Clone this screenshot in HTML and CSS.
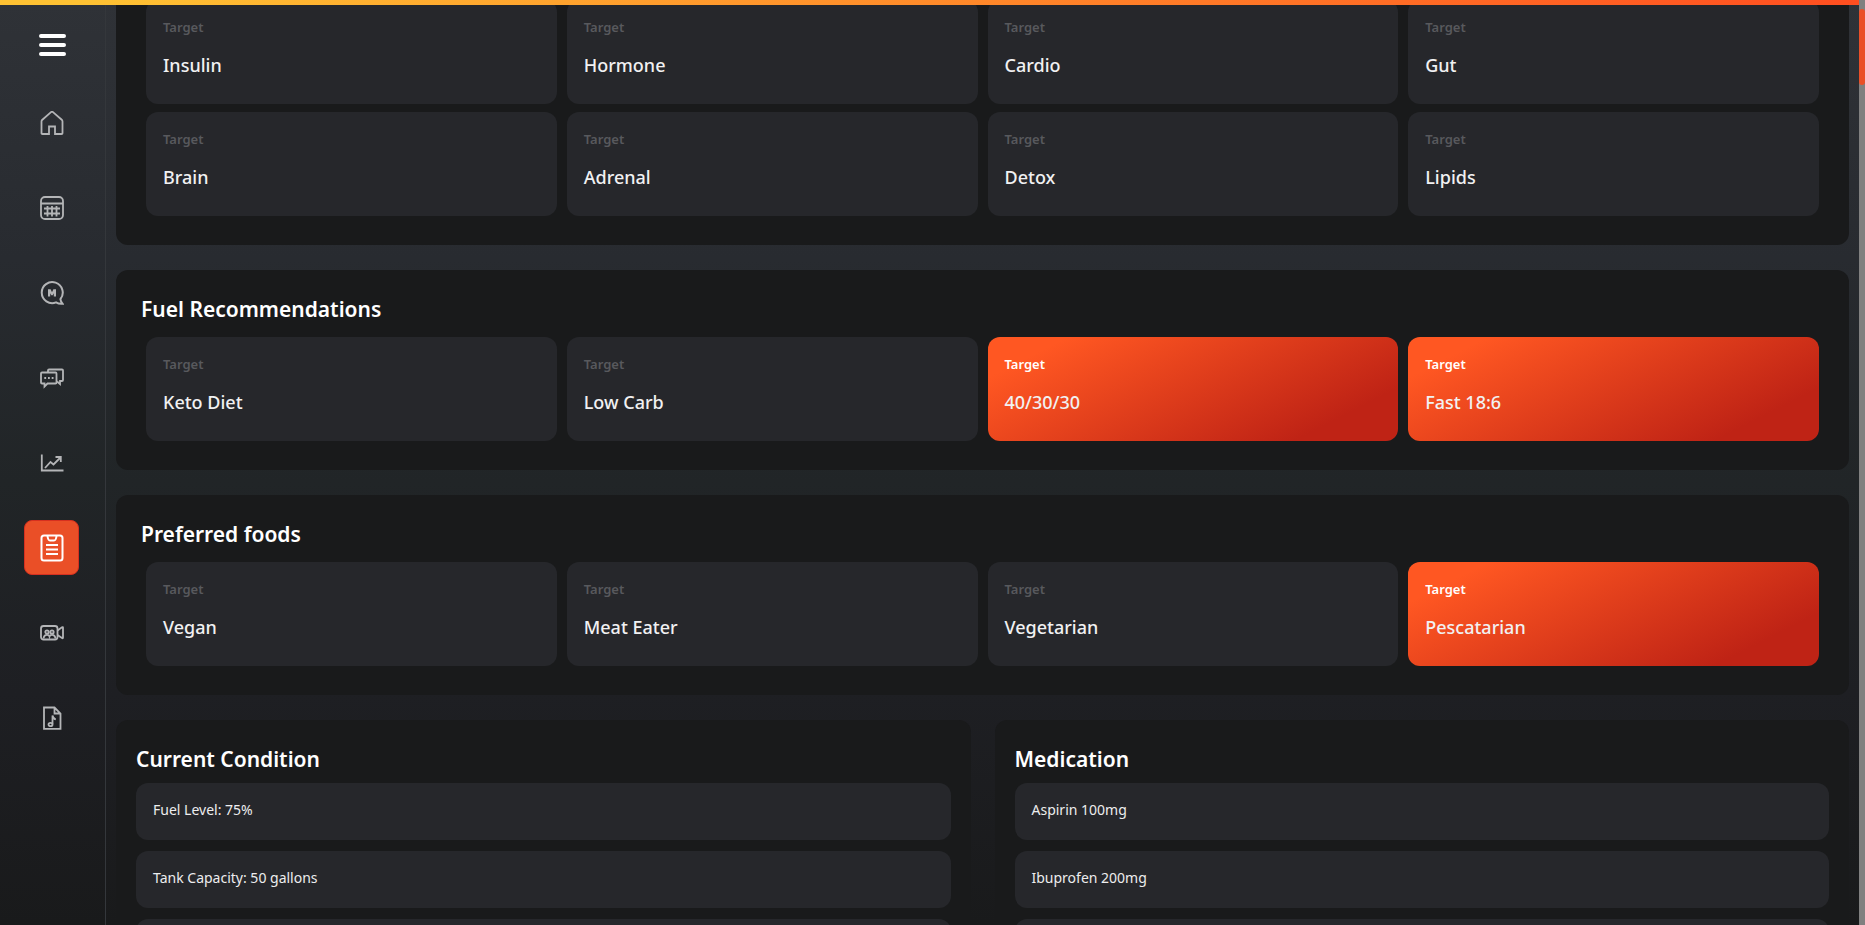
FILE: index.html
```html
<!DOCTYPE html>
<html lang="en">
<head>
<meta charset="utf-8">
<meta name="viewport" content="width=device-width, initial-scale=1">
<title>Health Report</title>
<link rel="stylesheet" href="styles.css">
</head>
<body>
<div class="progress-bar"></div>
<div class="app">
  <nav class="sidebar" aria-label="Main">
    <button class="menu-button" type="button" aria-label="Menu">
      <svg width="28" height="24" viewBox="0 0 28 24" fill="none" stroke="#fff" stroke-width="4" stroke-linecap="round"><path d="M3 3h23M3 12h23M3 21h23"/></svg>
    </button>
    <a class="nav-link" href="#home" aria-label="Home">
      <svg class="icon" viewBox="0 0 24 24"><path d="M1.5 22.2V10.4Q1.5 9.6 2.1 9L11 1.1Q12 .4 13 1.100L22 9Q22.500 9.600 22.500 10.400V22.200Q22.500 23 21.600 23H15V15.500H9V23H2.400Q1.500 23 1.500 22.200Z"/></svg>
    </a>
    <a class="nav-link" href="#calendar" aria-label="Calendar">
      <svg class="icon" viewBox="0 0 24 24"><rect x="1" y="1" width="22" height="22" rx="4"/><path d="M1 7.500h22M4 12.500h16M4 17.500h16M7.500 10v10.500M12 10v10.500M16.500 10v10.500"/></svg>
    </a>
    <a class="nav-link" href="#coach" aria-label="Coach">
      <svg class="icon icon-bold" viewBox="0 0 24 24"><path d="M20.400 18.200A10.500 10.500 0 1 0 16 21.400Q19 23.200 22.500 22.800Q20.800 21 20.400 18.200Z"/><path d="M8 8.300H10.600L12 11.300L13.400 8.300H16V15.500H13.800V12.200L12.700 14.300H11.300L10.200 12.200V15.500H8Z" fill="currentColor" stroke="none"/></svg>
    </a>
    <a class="nav-link" href="#messages" aria-label="Messages">
      <svg class="icon" viewBox="0 0 24 24"><path d="M2 6.500H15.500Q16.500 6.500 16.500 7.500V16.500Q16.500 17.500 15.500 17.500H7.500L4.500 20.500V17.500H2Q1 17.500 1 16.500V7.500Q1 6.500 2 6.500Z"/><path d="M8 6V4.500Q8 3.500 9 3.500H22Q23 3.500 23 4.500V14Q23 15 22 15H20V18L17 15.500"/><path d="M4.300 12h1.800M8 12h1.800M11.700 12h1.800" stroke-width="2"/></svg>
    </a>
    <a class="nav-link" href="#progress" aria-label="Progress">
      <svg class="icon" viewBox="0 0 24 24"><path d="M1.800 3.500V19.500H23.500M5 17L10.500 11L13.500 13.500L20.500 6.500M15.500 6H20.800V11"/></svg>
    </a>
    <a class="nav-link nav-link-active" href="#report" aria-label="Report" aria-current="page">
      <svg class="icon icon-report" viewBox="0 0 24 28"><rect x="1.500" y="1.500" width="21" height="25" rx="2.500"/><path d="M7.500 2Q8 6.500 10 6.500H14Q16 6.500 16.500 2M6 11H18M6 15.500H18M6 20H18"/></svg>
    </a>
    <a class="nav-link" href="#video" aria-label="Video calls">
      <svg class="icon" viewBox="0 0 24 24"><rect x="1" y="5" width="16.500" height="13.500" rx="2.500"/><path d="M17.500 9.500L22 6.300Q23 5.800 23 6.800V16.500Q23 17.700 22 17L17.500 14"/><circle cx="7" cy="11" r="1.700"/><circle cx="12" cy="11" r="1.700"/><path d="M3.500 17.500Q4 13.800 7 13.800Q9 13.800 9.500 15.500Q10 13.800 12 13.800Q15 13.800 15.500 17.500"/></svg>
    </a>
    <a class="nav-link" href="#audio" aria-label="Audio">
      <svg class="icon" viewBox="0 0 24 24"><path d="M4 1.500H14.500L20.500 7.500V22.800H4ZM14.500 1.500V7.500H20.500"/><path d="M12.500 18.300V9.500Q13 12.500 15.800 13.500"/><ellipse cx="10.500" cy="18.500" rx="2" ry="1.700"/></svg>
    </a>
  </nav>

  <main class="content">
    <section class="panel panel-continued" aria-label="Focus areas">
      <div class="card-grid">
        <article class="card"><h3 class="card-label">Target</h3><p class="card-value">Insulin</p></article>
        <article class="card"><h3 class="card-label">Target</h3><p class="card-value">Hormone</p></article>
        <article class="card"><h3 class="card-label">Target</h3><p class="card-value">Cardio</p></article>
        <article class="card"><h3 class="card-label">Target</h3><p class="card-value">Gut</p></article>
        <article class="card"><h3 class="card-label">Target</h3><p class="card-value">Brain</p></article>
        <article class="card"><h3 class="card-label">Target</h3><p class="card-value">Adrenal</p></article>
        <article class="card"><h3 class="card-label">Target</h3><p class="card-value">Detox</p></article>
        <article class="card"><h3 class="card-label">Target</h3><p class="card-value">Lipids</p></article>
      </div>
    </section>

    <section class="panel">
      <h2 class="panel-title">Fuel Recommendations</h2>
      <div class="card-grid">
        <article class="card"><h3 class="card-label">Target</h3><p class="card-value">Keto Diet</p></article>
        <article class="card"><h3 class="card-label">Target</h3><p class="card-value">Low Carb</p></article>
        <article class="card card-selected"><h3 class="card-label">Target</h3><p class="card-value">40/30/30</p></article>
        <article class="card card-selected"><h3 class="card-label">Target</h3><p class="card-value">Fast 18:6</p></article>
      </div>
    </section>

    <section class="panel">
      <h2 class="panel-title">Preferred foods</h2>
      <div class="card-grid">
        <article class="card"><h3 class="card-label">Target</h3><p class="card-value">Vegan</p></article>
        <article class="card"><h3 class="card-label">Target</h3><p class="card-value">Meat Eater</p></article>
        <article class="card"><h3 class="card-label">Target</h3><p class="card-value">Vegetarian</p></article>
        <article class="card card-selected"><h3 class="card-label">Target</h3><p class="card-value">Pescatarian</p></article>
      </div>
    </section>

    <div class="split">
      <section class="panel panel-list">
        <h2 class="panel-title">Current Condition</h2>
        <ul class="list">
          <li class="list-item">Fuel Level: 75%</li>
          <li class="list-item">Tank Capacity: 50 gallons</li>
          <li class="list-item"></li>
        </ul>
      </section>
      <section class="panel panel-list">
        <h2 class="panel-title">Medication</h2>
        <ul class="list">
          <li class="list-item">Aspirin 100mg</li>
          <li class="list-item">Ibuprofen 200mg</li>
          <li class="list-item"></li>
        </ul>
      </section>
    </div>
  </main>
  <div class="scroll-track"><div class="scroll-thumb"></div></div>
</div>
</body>
</html>
```
FILE: styles.css
```css
* {
  box-sizing: border-box;
}

body {
  margin: 0;
  color: #fff;
  font-family: "Noto Sans", "Open Sans", sans-serif;
  background: #191a1b;
}

h2,
h3,
p,
ul {
  margin: 0;
  padding: 0;
}

.app {
  display: flex;
  height: 100vh;
  overflow: hidden;
  background: linear-gradient(180deg, #2f3237 0%, #282b30 28%, #212527 52%, #1e1f23 75%, #191a1b 100%);
}

.progress-bar {
  position: absolute;
  top: 0;
  left: 0;
  right: 6px;
  height: 5px;
  z-index: 2;
  background: linear-gradient(90deg, #ffc233 0%, #ffc233 5%, #ff4e20 100%);
}

.sidebar {
  flex: none;
  display: flex;
  flex-direction: column;
  align-items: center;
  gap: 30px;
  width: 106px;
  padding: 30px 2px 0 0;
  border-right: 1px solid #34373b;
}

.menu-button {
  display: block;
  margin-bottom: 5px;
  padding: 3px 0;
  border: 0;
  background: none;
  line-height: 0;
}

.nav-link {
  display: grid;
  place-items: center;
  width: 55px;
  height: 55px;
  border-radius: 8px;
  color: #b4b5b7;
}

.nav-link-active {
  background: #ea4f27;
  border: 1px solid #d6301f;
  color: #fff;
}

.icon {
  width: 24px;
  height: 24px;
  fill: none;
  stroke: currentColor;
  stroke-width: 1.8;
}

.icon-bold {
  stroke-width: 2;
}

.icon-report {
  height: 28px;
  stroke-width: 2;
}

.content {
  flex: 1;
  min-width: 0;
  display: flex;
  flex-direction: column;
  gap: 25px;
  padding: 0 10px;
}

.content > * {
  flex: none;
}

.panel {
  padding: 24px 25px 29px;
  border-radius: 12px;
  background: #191a1b;
}

.panel-continued {
  padding-top: 0;
  border-radius: 0 0 12px 12px;
}

.panel-title {
  margin-bottom: 13px;
  font-size: 21px;
  line-height: 30px;
  font-weight: 600;
}

.card-grid {
  display: grid;
  grid-template-columns: repeat(4, 1fr);
  gap: 8px 10px;
  margin: 0 5px;
}

.card {
  height: 104px;
  padding: 16px 17px;
  border-radius: 12px;
  background: #26272b;
}

.card-label {
  color: #58595d;
  font-size: 13px;
  line-height: 22px;
  font-weight: 600;
}

.card-value {
  margin-top: 12px;
  color: #f1f1f2;
  font-size: 18px;
  line-height: 30px;
  font-weight: 500;
}

.card-selected {
  background: linear-gradient(153deg, #ff5722 13%, #bf2315 83%);
}

.card-selected .card-label {
  color: #fff;
}

.split {
  display: grid;
  grid-template-columns: 1fr 1fr;
  gap: 24px;
}

.panel-list {
  padding: 24px 20px;
}

.panel-list .panel-title {
  margin-bottom: 9px;
}

.list {
  display: grid;
  gap: 11px;
  list-style: none;
}

.list-item {
  height: 57px;
  padding: 17px;
  border-radius: 12px;
  background: #26272b;
  color: #ededee;
  font-size: 14px;
  line-height: 20px;
}

.scroll-track {
  flex: none;
  width: 6px;
  padding-top: 9px;
  background: #808080;
}

.scroll-thumb {
  height: 76px;
  border-radius: 3px;
  background: #ea4f27;
}
```
